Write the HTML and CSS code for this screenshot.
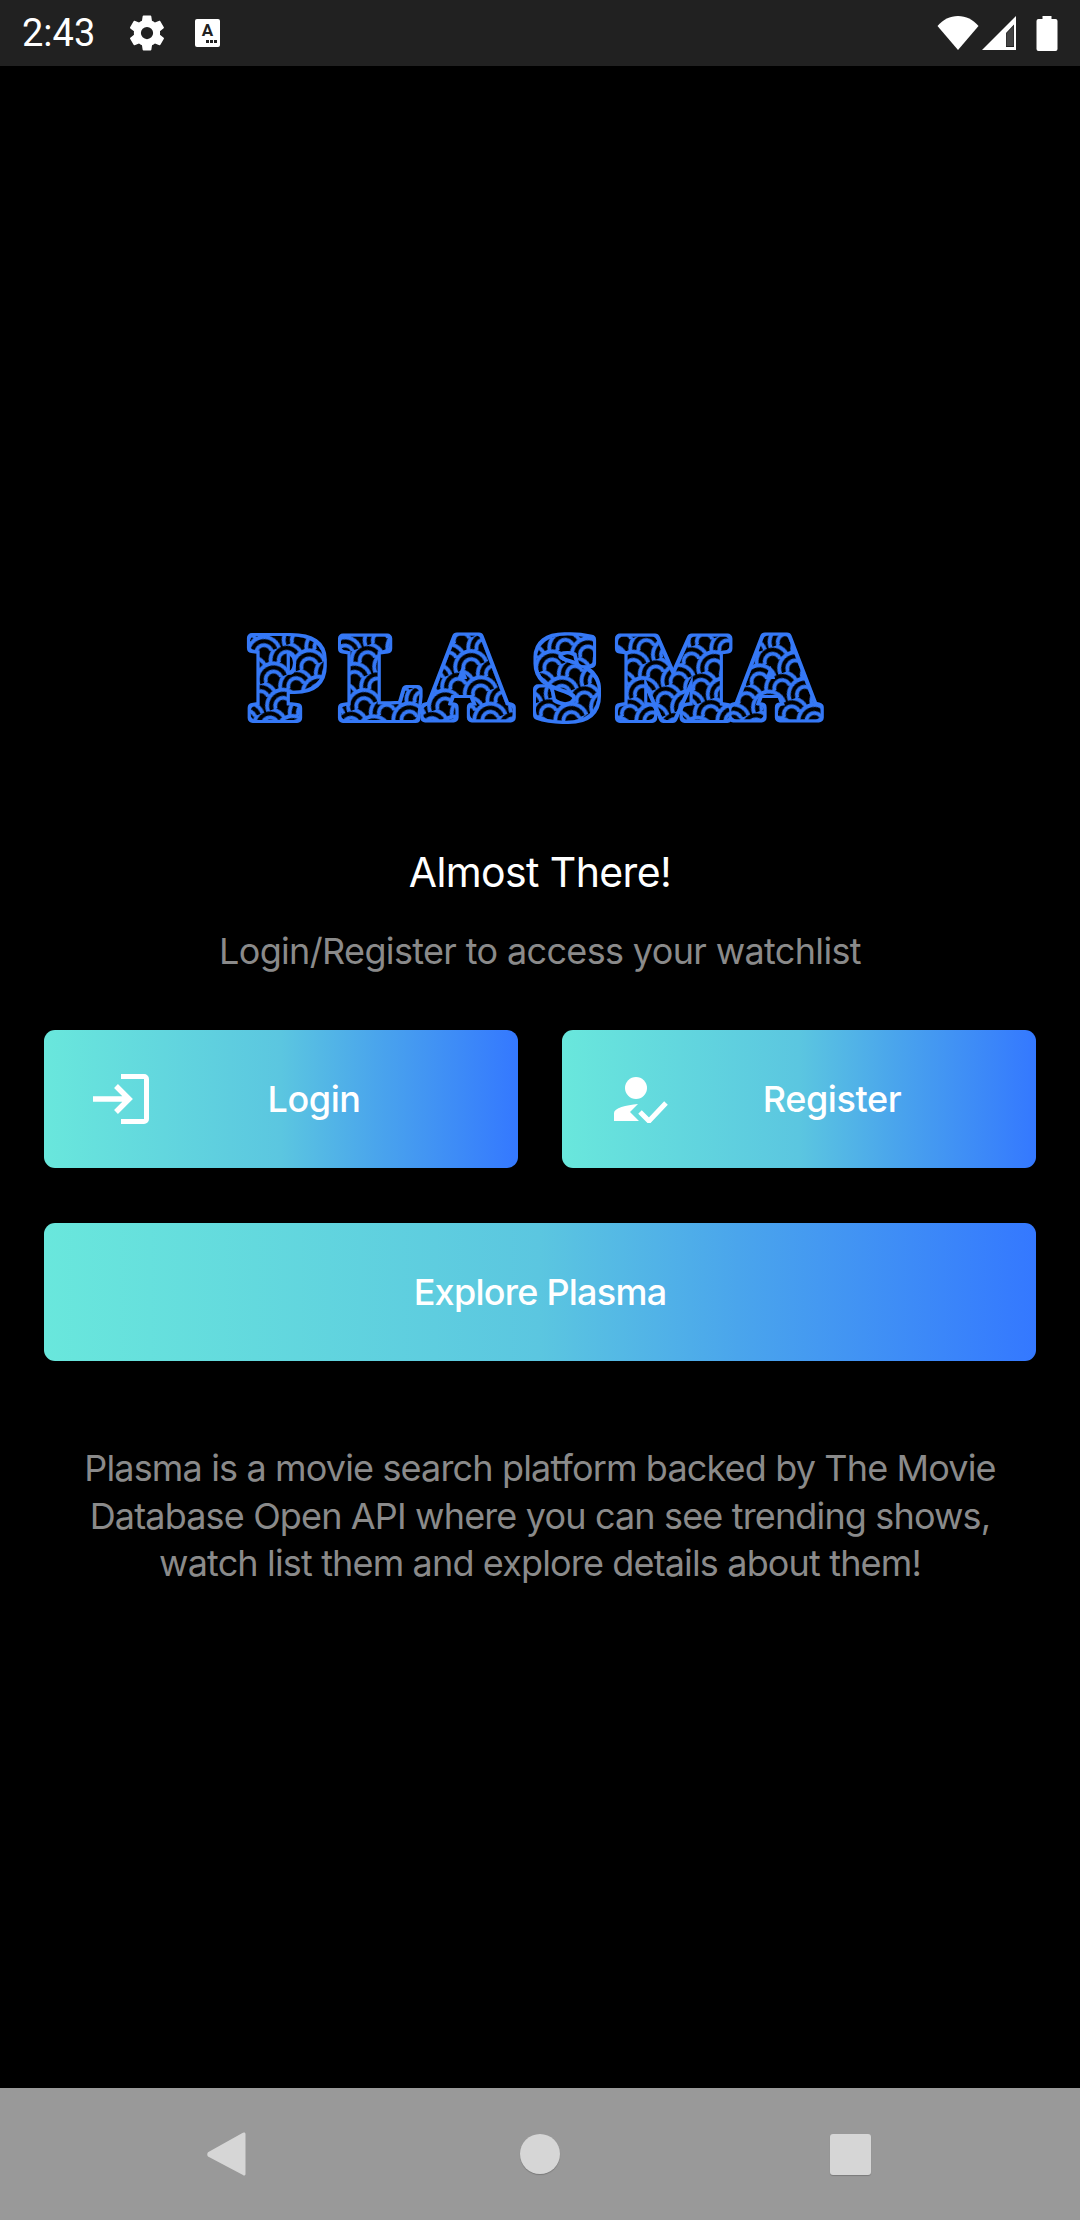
FILE: index.html
```html
<!DOCTYPE html>
<html>
<head>
    <title>Plasma</title>
    <link rel="stylesheet" href="styles.css">
</head>
<body>
    <div class="status-bar">
        <div class="status-left">
            <span class="clock">2:43</span>
            <svg class="gear" viewBox="0 0 24 24"><path d="M19.4 13c.04-.33.07-.66.07-1s-.03-.67-.07-1l2.1-1.65c.2-.15.25-.42.12-.64l-2-3.46c-.12-.22-.39-.3-.61-.22l-2.49 1c-.52-.4-1.08-.73-1.69-.98l-.38-2.65A.49.49 0 0 0 14 2h-4c-.25 0-.46.18-.49.42l-.38 2.65c-.61.25-1.17.59-1.69.98l-2.49-1a.5.5 0 0 0-.61.22l-2 3.46c-.13.22-.07.49.12.64L4.57 11c-.04.33-.07.67-.07 1s.03.67.07 1l-2.11 1.65c-.19.15-.24.42-.12.64l2 3.46c.12.22.39.3.61.22l2.49-1c.52.4 1.08.73 1.69.98l.38 2.65c.03.24.24.42.49.42h4c.25 0 .46-.18.49-.42l.38-2.65c.61-.25 1.17-.59 1.69-.98l2.49 1c.23.09.49 0 .61-.22l2-3.46c.12-.22.07-.49-.12-.64L19.4 13zM12 15.5a3.5 3.5 0 1 1 0-7 3.5 3.5 0 0 1 0 7z"/></svg>
            <div class="a-icon"><span class="a-letter">A</span><span class="a-dots"><i></i><i></i><i></i></span></div>
        </div>
        <div class="status-right">
            <svg class="wifi" viewBox="0 0 42 36"><path d="M0.5 11C6 4.500 13 1 21 1s15 3.500 20.500 10L21 35z"/></svg>
            <svg class="signal" viewBox="0 0 36 36"><path fill-rule="evenodd" d="M35 1v34H1zM33 9.500l-8 8.500v14h8z"/><path class="signal-gap" d="M32.500 11v20h-7V18.500z"/></svg>
            <svg class="battery" viewBox="0 0 22 36"><path d="M6.500 1h9v3h4a2 2 0 0 1 2 2v28a2 2 0 0 1-2 2h-17a2 2 0 0 1-2-2V6a2 2 0 0 1 2-2h4z"/></svg>
        </div>
    </div>

    <main class="content">
        <svg class="logo" viewBox="0 0 620 140" role="img" aria-label="PLASMA">
            <defs>
                <pattern id="scales" width="38" height="28" patternUnits="userSpaceOnUse" patternTransform="rotate(-20)">
                    <rect width="38" height="28" fill="#000"/>
                    <path d="M3 28a16 16 0 0 1 32 0M11 28a8 8 0 0 1 16 0M-16 14a16 16 0 0 1 32 0M-8 14a8 8 0 0 1 16 0M22 14a16 16 0 0 1 32 0M30 14a8 8 0 0 1 16 0" fill="none" stroke="#3478f6" stroke-width="4"/>
                </pattern>
                <filter id="outline" x="-5%" y="-15%" width="110%" height="130%">
                    <feMorphology in="SourceAlpha" operator="dilate" radius="3" result="fat"/>
                    <feFlood flood-color="#3478f6"/>
                    <feComposite in2="fat" operator="in" result="edge"/>
                    <feMerge>
                        <feMergeNode in="edge"/>
                        <feMergeNode in="SourceGraphic"/>
                    </feMerge>
                </filter>
            </defs>
            <text class="logo-text" x="26 117 200 308 394 508" y="108" fill="url(#scales)" stroke="url(#scales)" filter="url(#outline)">PLASMA</text>
        </svg>

        <h1 class="title">Almost There!</h1>
        <p class="subtitle">Login/Register to access your watchlist</p>

        <div class="btn-row">
            <a class="btn btn-half">
                <svg class="btn-icon login-icon" viewBox="0 0 56 50"><path d="M28 2.500h23a2.500 2.500 0 0 1 2.500 2.500v40a2.500 2.500 0 0 1-2.500 2.500H28" fill="none" stroke="#fff" stroke-width="5"/><path d="M0 25h37M23 12l13 13-13 13" fill="none" stroke="#fff" stroke-width="5.500"/></svg>
                <span class="btn-label">Login</span>
            </a>
            <a class="btn btn-half">
                <svg class="btn-icon register-icon" viewBox="0 0 54 46"><circle cx="22" cy="11" r="11"/><path d="M0 44V36C0 31 12 28 24 27L16 35 25 44Z"/><path d="M26 35l9 9 17-18" fill="none" stroke="#fff" stroke-width="5"/></svg>
                <span class="btn-label">Register</span>
            </a>
        </div>
        <a class="btn btn-wide"><span class="btn-label">Explore Plasma</span></a>

        <p class="about">Plasma is a movie search platform backed by The Movie Database Open API where you can see trending shows, watch list them and explore details about them!</p>
    </main>

    <div class="nav-bar">
        <svg class="nav-back" viewBox="0 0 40 46"><path d="M38 1.500c1 0 1.500.7 1.500 1.500v40c0 1.500-1.500 2-2.500 1L2 25.500c-1-1.300-1-3 0-4.300L36 2.200c.6-.5 1.300-.7 2-.7z"/></svg>
        <div class="nav-home"></div>
        <div class="nav-recent"></div>
    </div>
</body>
</html>
```

FILE: styles.css
```css
* {
    box-sizing: border-box;
}
html, body {
    margin: 0;
    height: 100%;
}
body {
    width: 1080px;
    height: 2220px;
    background-color: #000;
    color: #fff;
    font-family: Inter, sans-serif;
    display: flex;
    flex-direction: column;
    overflow: hidden;
}

/* status bar */
.status-bar {
    height: 66px;
    background-color: #212121;
    display: flex;
    justify-content: space-between;
    align-items: center;
    padding: 0 22px;
    flex-shrink: 0;
}
.status-left, .status-right {
    display: flex;
    align-items: center;
}
.clock {
    font-family: Roboto, sans-serif;
    font-size: 38px;
    width: 104px;
}
.gear {
    width: 42px;
    height: 42px;
    fill: #fff;
}
.a-icon {
    width: 25px;
    height: 28px;
    margin-left: 27px;
    background-color: #fff;
    border-radius: 2px;
    color: #212121;
    display: flex;
    flex-direction: column;
    align-items: center;
    overflow: hidden;
}
.a-letter {
    font-family: Roboto, sans-serif;
    font-weight: 700;
    font-size: 17px;
    line-height: 19px;
    margin-top: 2px;
}
.a-dots {
    display: flex;
    gap: 1px;
    align-self: flex-end;
    margin-right: 3px;
}
.a-dots i {
    width: 3px;
    height: 3px;
    background-color: #212121;
}
.wifi {
    width: 42px;
    height: 36px;
    fill: #fff;
}
.signal {
    width: 36px;
    height: 36px;
    margin-left: 2px;
    fill: #fff;
}
.signal-gap {
    fill: #444;
}
.battery {
    width: 22px;
    height: 36px;
    margin-left: 19px;
    fill: #fff;
}

/* main */
.content {
    flex: 1;
    padding: 0 44px;
    display: flex;
    flex-direction: column;
    align-items: center;
}
.logo {
    width: 620px;
    height: 140px;
    margin-top: 541px;
    margin-left: -7px;
    flex-shrink: 0;
}
.logo-text {
    font-family: "Liberation Serif", serif;
    font-weight: 700;
    font-size: 113px;
    stroke-width: 10px;
    stroke-linejoin: round;
}
.title {
    margin: 100px 0 0;
    font-size: 41px;
    font-weight: 400;
    line-height: 50px;
    letter-spacing: -0.6px;
}
.subtitle {
    margin: 31px 0 0;
    font-size: 36px;
    line-height: 46px;
    color: #8a8a8a;
    letter-spacing: -0.65px;
}
.btn-row {
    display: flex;
    gap: 44px;
    width: 100%;
    margin-top: 56px;
}
.btn {
    height: 138px;
    border-radius: 11px;
    background: linear-gradient(to right, #69e7dc 0%, #5bc6e0 50%, #4aa5ec 70%, #3478ff 100%);
    display: flex;
    align-items: center;
    justify-content: center;
    position: relative;
}
.btn-half {
    flex: 1;
}
.btn-wide {
    width: 100%;
    margin-top: 55px;
}
.btn-label {
    font-size: 36px;
    font-weight: 500;
    letter-spacing: -0.75px;
}
.btn-half .btn-label {
    margin-left: 66px;
    letter-spacing: -0.4px;
}
.btn-icon {
    position: absolute;
    fill: #fff;
}
.login-icon {
    left: 49px;
    top: 44px;
    width: 56px;
    height: 50px;
}
.register-icon {
    left: 52px;
    top: 47px;
    width: 54px;
    height: 46px;
}
.about {
    margin: 84px 0 0;
    width: 960px;
    font-size: 36px;
    line-height: 47.5px;
    color: #8a8a8a;
    text-align: center;
    letter-spacing: -0.85px;
}

/* nav bar */
.nav-bar {
    height: 132px;
    background-color: #999;
    flex-shrink: 0;
    position: relative;
}
.nav-back {
    position: absolute;
    left: 206px;
    top: 43px;
    width: 40px;
    height: 46px;
    fill: #d6d6d6;
}
.nav-home {
    position: absolute;
    left: 520px;
    top: 46px;
    width: 40px;
    height: 40px;
    border-radius: 50%;
    background-color: #d6d6d6;
    box-shadow: 0 1px 1px rgba(0, 0, 0, 0.2);
}
.nav-recent {
    position: absolute;
    left: 830px;
    top: 46px;
    width: 41px;
    height: 41px;
    border-radius: 3px;
    background-color: #d6d6d6;
    box-shadow: 0 1px 1px rgba(0, 0, 0, 0.2);
}
```
